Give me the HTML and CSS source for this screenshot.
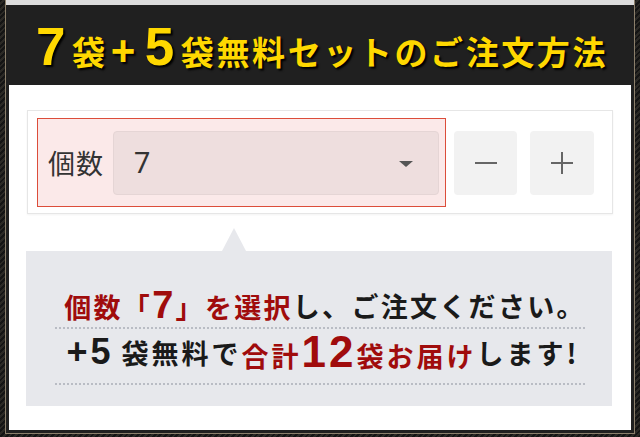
FILE: index.html
```html
<!DOCTYPE html>
<html lang="ja">

<head>
    <meta charset="UTF-8">
    <meta name="viewport" content="width=device-width, initial-scale=1.0">
    <title>7袋+5袋無料セットのご注文方法</title>
    <link rel="stylesheet" href="styles.css">
</head>

<body>

    <div class="frame">
        <div class="top-strip"></div>

        <!-- Title -->
        <div class="header">
            <h1><span class="num">7</span>袋<span class="plus">+</span><span class="num">5</span>袋無料セットのご注文方法</h1>
        </div>

        <div class="content">
            <!-- Quantity form -->
            <div class="qty-card">
                <div class="qty-field">
                    <label for="qty">個数</label>
                    <div class="select-box">
                        <select id="qty" name="qty">
                            <option>7</option>
                        </select>
                        <span class="caret"></span>
                    </div>
                </div>
                <button class="step-btn btn-minus" type="button" aria-label="減らす"><span class="minus"></span></button>
                <button class="step-btn btn-plus" type="button" aria-label="増やす"><span class="plus-icon"></span></button>
            </div>

            <!-- Callout -->
            <div class="callout">
                <p class="line line-1"><span class="red">個数「<span class="num-7">7</span>」を選択</span>し、ご注文ください。</p>
                <p class="line line-2"><span class="big-plus">+5</span>袋無料で<span class="red">合計<span class="num-12">12</span>袋お届け</span>します!</p>
            </div>
        </div>
    </div>

</body>

</html>
```

FILE: styles.css
```css
body {
    margin: 0;
    padding: 0;
    height: 437px;
    overflow: hidden;
    font-family: "Noto Sans CJK JP", "Liberation Sans", sans-serif;
    background-color: #1c1b19;
    background-image: repeating-linear-gradient(135deg, #141414 0 2px, #2b2925 2px 4px);
}

.frame {
    margin: 0 5px;
    border: 1px solid #8b7f6b;
    border-top: none;
    background-color: #202020;
    padding-bottom: 3px;
}

.top-strip {
    height: 5px;
    background-color: #dcdcdc;
}

.header {
    height: 78px;
    display: flex;
    align-items: center;
    justify-content: center;
    padding-top: 2px;
}

h1 {
    margin: 0;
    color: #ffd800;
    font-size: 33px;
    font-weight: bold;
    letter-spacing: 2.6px;
    white-space: nowrap;
    text-shadow: 2px 2px 2px #000000;
    line-height: 1;
}

h1 .num {
    font-family: "Liberation Sans", sans-serif;
    font-size: 53px;
    margin: 0 4px;
}

h1 .plus {
    font-family: "Liberation Sans", sans-serif;
    font-size: 42px;
    margin: 0 3px;
}

.content {
    margin: 0 3px;
    background-color: #ffffff;
    padding: 25px 18px 24px;
}

.qty-card {
    display: flex;
    align-items: center;
    border: 1px solid #e6e6e6;
    box-shadow: 0 1px 2px rgba(0, 0, 0, 0.05);
    padding: 7px 19px 6px 9px;
}

.qty-field {
    display: flex;
    align-items: center;
    flex-shrink: 0;
    width: 409px;
    height: 89px;
    border: 1px solid #dc4d3a;
    background-color: #fbe9e9;
    padding: 0 6px 0 10px;
    box-sizing: border-box;
}

.qty-field label {
    font-size: 27px;
    color: #333333;
    width: 65px;
    letter-spacing: 1px;
}

.select-box {
    position: relative;
    flex: 1;
}

select {
    width: 100%;
    height: 64px;
    appearance: none;
    -webkit-appearance: none;
    border: 1px solid #e5d5d5;
    border-radius: 4px;
    background-color: #eedede;
    font-family: "Roboto", "Liberation Sans", sans-serif;
    font-size: 29px;
    color: #333333;
    padding: 0 20px;
}

.caret {
    position: absolute;
    right: 26px;
    top: 30px;
    border-left: 7px solid transparent;
    border-right: 7px solid transparent;
    border-top: 6px solid #555555;
}

.step-btn {
    flex-shrink: 0;
    height: 64px;
    border: none;
    border-radius: 4px;
    background-color: #f2f2f2;
    display: flex;
    align-items: center;
    justify-content: center;
    padding: 0;
}

.btn-minus {
    width: 63px;
    margin-left: 8px;
}

.btn-plus {
    width: 64px;
    margin-left: 13px;
}

.minus {
    width: 22px;
    height: 2px;
    background-color: #666666;
}

.plus-icon {
    position: relative;
    width: 22px;
    height: 22px;
}

.plus-icon::before,
.plus-icon::after {
    content: "";
    position: absolute;
    background-color: #666666;
}

.plus-icon::before {
    left: 0;
    top: 10px;
    width: 22px;
    height: 2px;
}

.plus-icon::after {
    left: 10px;
    top: 0;
    width: 2px;
    height: 22px;
}

.callout {
    position: relative;
    margin-top: 37px;
    margin-left: -1px;
    margin-right: 1px;
    background-color: #e7e8ec;
    padding: 22px 27px 21px 29px;
}

.callout::before {
    content: "";
    position: absolute;
    top: -23px;
    left: 196px;
    border-left: 12px solid transparent;
    border-right: 12px solid transparent;
    border-bottom: 23px solid #e7e8ec;
}

.line {
    margin: 0;
    display: flex;
    align-items: center;
    justify-content: center;
    white-space: nowrap;
    font-size: 27px;
    font-weight: bold;
    letter-spacing: 3px;
    color: #1a1a1a;
    border-bottom: 2px dotted #b9bcc4;
}

.line-1 {
    height: 44px;
    padding: 10px 0 0 10px;
    letter-spacing: 2.3px;
}

.line-2 {
    height: 46px;
    padding: 0 0 8px 6px;
}

.red {
    color: #a00c0c;
}

.num-7 {
    font-family: "Liberation Sans", sans-serif;
    font-size: 38px;
}

.big-plus {
    font-family: "Liberation Sans", sans-serif;
    font-size: 36px;
    margin-right: 8px;
}

.num-12 {
    font-family: "Liberation Sans", sans-serif;
    font-size: 44px;
    letter-spacing: 3px;
}
```
